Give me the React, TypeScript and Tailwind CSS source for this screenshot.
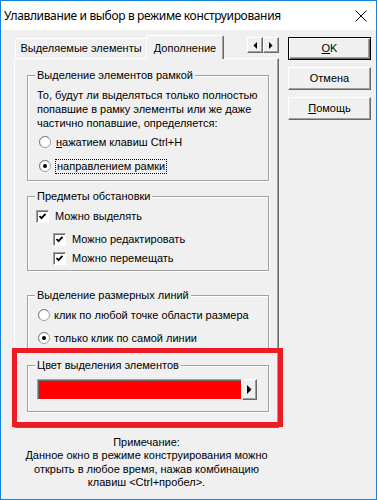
import React from "react";

const ui = { fontFamily: '"Liberation Sans", Arial, sans-serif' };

function Radio({ checked }: { checked?: boolean }) {
  return (
    <svg width="12" height="12" viewBox="0 0 12 12" className="shrink-0">
      <circle cx="6" cy="6" r="5.5" fill="#fff" stroke="#a0a0a0" />
      <path d="M2.1 9.9 A5.5 5.5 0 0 1 9.9 2.1" fill="none" stroke="#8a8a8a" strokeWidth="1" />
      {checked && <circle cx="6" cy="6" r="2" fill="#000" />}
    </svg>
  );
}

function Check() {
  return (
    <div className="w-[13px] h-[13px] shrink-0 bg-white border border-t-[#a0a0a0] border-l-[#a0a0a0] border-b-white border-r-white shadow-[inset_1px_1px_0_#696969] flex items-center justify-center">
      <svg width="9" height="9" viewBox="0 0 9 9">
        <polyline points="1.5,4 3.5,6.2 7.5,1.8" fill="none" stroke="#000" strokeWidth="1.8" />
      </svg>
    </div>
  );
}

function Group({ label, className, children }: { label: string; className?: string; children?: React.ReactNode }) {
  return (
    <div className={"relative border border-[#a0a0a0] shadow-[1px_1px_0_#fff,inset_1px_1px_0_#fff] " + (className || "")}>
      <span className="absolute left-[7px] -top-[8px] px-[2px] bg-[#f0f0f0] text-[11px] leading-[14px]">{label}</span>
      {children}
    </div>
  );
}

function Btn({ children, def }: { children: React.ReactNode; def?: boolean }) {
  return (
    <div
      className={
        "w-[83px] h-[23px] flex items-center justify-center text-[11px] bg-[#f0f0f0] " +
        (def
          ? "border border-black shadow-[inset_1px_1px_0_#fff,inset_-1px_-1px_0_#696969,inset_-2px_-2px_0_#a0a0a0]"
          : "border border-t-white border-l-white border-b-[#696969] border-r-[#696969] shadow-[inset_-1px_-1px_0_#a0a0a0]")
      }
    >
      {children}
    </div>
  );
}

export default function App() {
  return (
    <div className="relative w-[377px] h-[500px] border border-[#1883d7] bg-[#f0f0f0] text-black overflow-hidden" style={ui}>
      {/* title bar */}
      <div className="h-[29px] bg-white flex items-center pl-[3px] relative">
        <span className="text-[12px] leading-none tracking-[-0.35px]" style={{ fontFamily: '"Noto Sans", "Open Sans", sans-serif' }}>
          Улавливание и выбор в режиме конструирования
        </span>
        <svg width="12" height="12" viewBox="0 0 12 12" className="ml-auto mr-[9px]">
          <path d="M0.5 0.5 L11.5 11.5 M11.5 0.5 L0.5 11.5" stroke="#000" strokeWidth="1" />
        </svg>
      </div>

      <div className="flex pl-[13px] pt-[5px]">
        {/* left column */}
        <div className="w-[265px] flex flex-col">
          {/* tabs */}
          <div className="h-[23px] flex items-end">
            <div className="ml-[1px] w-[132px] h-[20px] border-t border-l border-white border-r border-r-[#696969] rounded-t-[2px] flex items-center justify-center text-[11px]">
              Выделяемые элементы
            </div>
            <div className="relative z-10 -ml-[1px] w-[78px] h-[24px] -mb-[1px] bg-[#f0f0f0] border-t border-l border-white border-r border-r-[#696969] shadow-[inset_-1px_0_0_#a0a0a0] rounded-t-[2px] flex items-start pt-[4px] justify-center text-[11px]">
              Дополнение
            </div>
            <div className="ml-auto self-start mt-[2px] flex">
              {["l", "r"].map((d) => (
                <div
                  key={d}
                  className="w-[16px] h-[16px] border border-t-white border-l-white border-b-[#696969] border-r-[#696969] shadow-[inset_-1px_-1px_0_#a0a0a0] flex items-center justify-center"
                >
                  <svg width="4" height="7" viewBox="0 0 4 7">
                    {d === "l" ? <polygon points="4,0 4,7 0.5,3.5" fill="#000" /> : <polygon points="0,0 0,7 3.5,3.5" fill="#000" />}
                  </svg>
                </div>
              ))}
            </div>
          </div>

          {/* panel */}
          <div className="h-[370px] border border-t-white border-l-white border-r-[#696969] border-b-[#696969] shadow-[inset_-1px_-1px_0_#a0a0a0] pl-[12px] pr-[9px] flex flex-col">
            <Group label="Выделение элементов рамкой" className="mt-[16px] h-[106px] w-[242px]">
              <div className="pl-[9px] pt-[12px] text-[11px] leading-[14px]">
                То, будут ли выделяться только полностью
                <br />
                попавшие в рамку элементы или же даже
                <br />
                частично попавшие, определяется:
              </div>
              <div className="flex items-center h-[16px] mt-[4px] pl-[11px] gap-[5px] text-[11px]">
                <Radio />
                <span>
                  <span className="underline">н</span>ажатием клавиш Ctrl+H
                </span>
              </div>
              <div className="flex items-center h-[16px] mt-[8px] pl-[11px] gap-[4px] text-[11px]">
                <Radio checked />
                <span className="border border-dotted border-black px-[1px] leading-[13px]">направлением рамки</span>
              </div>
            </Group>

            <Group label="Предметы обстановки" className="mt-[15px] h-[75px] w-[242px]">
              <div className="flex items-center h-[16px] mt-[11px] pl-[8px] gap-[6px] text-[11px]">
                <Check />
                <span>Можно выделять</span>
              </div>
              <div className="flex items-center h-[16px] mt-[7px] pl-[25px] gap-[6px] text-[11px]">
                <Check />
                <span>Можно редактировать</span>
              </div>
              <div className="flex items-center h-[16px] mt-[3px] pl-[25px] gap-[6px] text-[11px]">
                <Check />
                <span>Можно перемещать</span>
              </div>
            </Group>

            <Group label="Выделение размерных линий" className="mt-[24px] h-[57px] w-[242px]">
              <div className="flex items-center h-[16px] mt-[11px] pl-[10px] gap-[4px] text-[11px]">
                <Radio />
                <span>клик по любой точке области размера</span>
              </div>
              <div className="flex items-center h-[16px] mt-[7px] pl-[10px] gap-[4px] text-[11px]">
                <Radio checked />
                <span>только клик по самой линии</span>
              </div>
            </Group>

            <Group label="Цвет выделения элементов" className="mt-[13px] h-[47px] w-[242px]">
              <div className="flex mt-[13px] pl-[9px]">
                <div className="w-[205px] h-[21px] bg-[#ff0000] border border-t-[#a0a0a0] border-l-[#a0a0a0] border-b-white border-r-white shadow-[inset_1px_1px_0_#696969]" />
                <div className="w-[15px] h-[21px] border border-t-white border-l-white border-b-[#696969] border-r-[#696969] shadow-[inset_-1px_-1px_0_#a0a0a0] flex items-center justify-center">
                  <svg width="5" height="9" viewBox="0 0 5 9">
                    <polygon points="0,0 0,9 4.5,4.5" fill="#000" />
                  </svg>
                </div>
              </div>
            </Group>
          </div>

          {/* note */}
          <div className="mt-[8px] text-center text-[11px] leading-[13.4px]">
            Примечание:
            <br />
            Данное окно в режиме конструирования можно
            <br />
            открыть в любое время, нажав комбинацию
            <br />
            клавиш &lt;Ctrl+пробел&gt;.
          </div>
        </div>

        {/* right column */}
        <div className="ml-[9px] pt-[2px] flex flex-col gap-[7px]">
          <Btn def>
            <span>
              <span className="underline">O</span>K
            </span>
          </Btn>
          <Btn>Отмена</Btn>
          <Btn>
            <span>
              <span className="underline">П</span>омощь
            </span>
          </Btn>
        </div>
      </div>

      {/* red annotation frame */}
      <div className="absolute left-[11px] top-[347px] w-[271px] h-[79px] border-[5px] border-[#ed1c24] pointer-events-none" />
    </div>
  );
}
